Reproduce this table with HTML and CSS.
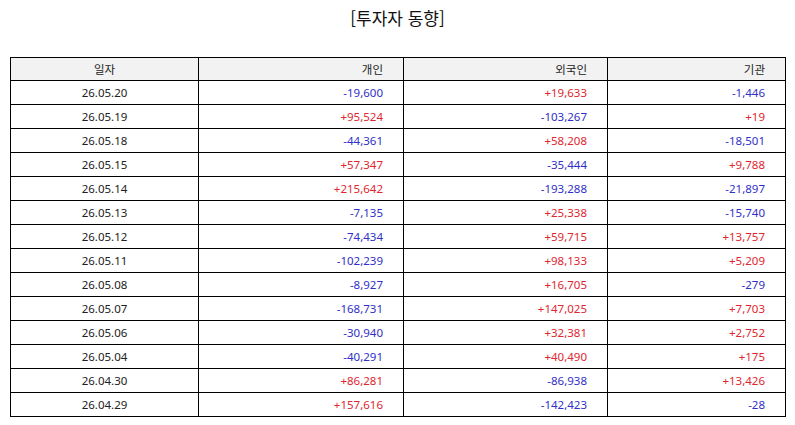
FILE: index.html
```html
<!DOCTYPE html>
<html lang="ko">
<head>
<meta charset="utf-8">
<title>투자자 동향</title>
<link rel="stylesheet" href="styles.css">
</head>
<body>
<div class="page">
  <h1 class="title">[투자자 동향]</h1>
  <table class="trend">
    <colgroup>
      <col class="c-date"><col class="c-ind"><col class="c-for"><col class="c-inst">
    </colgroup>
    <thead>
      <tr><th class="center">일자</th><th>개인</th><th>외국인</th><th>기관</th></tr>
    </thead>
    <tbody>
      <tr><td class="center">26.05.20</td><td class="down">-19,600</td><td class="up">+19,633</td><td class="down">-1,446</td></tr>
      <tr><td class="center">26.05.19</td><td class="up">+95,524</td><td class="down">-103,267</td><td class="up">+19</td></tr>
      <tr><td class="center">26.05.18</td><td class="down">-44,361</td><td class="up">+58,208</td><td class="down">-18,501</td></tr>
      <tr><td class="center">26.05.15</td><td class="up">+57,347</td><td class="down">-35,444</td><td class="up">+9,788</td></tr>
      <tr><td class="center">26.05.14</td><td class="up">+215,642</td><td class="down">-193,288</td><td class="down">-21,897</td></tr>
      <tr><td class="center">26.05.13</td><td class="down">-7,135</td><td class="up">+25,338</td><td class="down">-15,740</td></tr>
      <tr><td class="center">26.05.12</td><td class="down">-74,434</td><td class="up">+59,715</td><td class="up">+13,757</td></tr>
      <tr><td class="center">26.05.11</td><td class="down">-102,239</td><td class="up">+98,133</td><td class="up">+5,209</td></tr>
      <tr><td class="center">26.05.08</td><td class="down">-8,927</td><td class="up">+16,705</td><td class="down">-279</td></tr>
      <tr><td class="center">26.05.07</td><td class="down">-168,731</td><td class="up">+147,025</td><td class="up">+7,703</td></tr>
      <tr><td class="center">26.05.06</td><td class="down">-30,940</td><td class="up">+32,381</td><td class="up">+2,752</td></tr>
      <tr><td class="center">26.05.04</td><td class="down">-40,291</td><td class="up">+40,490</td><td class="up">+175</td></tr>
      <tr><td class="center">26.04.30</td><td class="up">+86,281</td><td class="down">-86,938</td><td class="up">+13,426</td></tr>
      <tr><td class="center">26.04.29</td><td class="up">+157,616</td><td class="down">-142,423</td><td class="down">-28</td></tr>
    </tbody>
  </table>
</div>
</body>
</html>
```
FILE: styles.css
```css
html, body {
  margin: 0;
  padding: 0;
  background: #ffffff;
}
.page {
  padding: 6px 10px 0 10px;
  font-family: "Noto Sans", "Noto Sans CJK KR", sans-serif;
  color: #222;
}
.title {
  margin: 0 0 27px 0;
  text-align: center;
  font-size: 17px;
  font-weight: normal;
  line-height: 24px;
  color: #111;
  font-family: "Noto Sans CJK KR", sans-serif;
}
.trend {
  width: 775px;
  border-collapse: collapse;
  table-layout: fixed;
  font-size: 11.5px;
}
.c-date { width: 188px; }
.c-ind { width: 205px; }
.c-for { width: 204px; }
.c-inst { width: 178px; }
.trend th, .trend td {
  border: 1px solid #000;
  height: 24px;
  padding: 0 20px 0 4px;
  text-align: right;
  font-weight: normal;
  line-height: 14px;
  box-sizing: border-box;
}
.trend th {
  height: 23px;
  background: #f2f2f2;
  color: #222;
  font-family: "Noto Sans CJK KR", sans-serif;
}
.trend .center {
  text-align: center;
  padding: 0 4px;
}
.up { color: #e0262f; }
.down { color: #3030c8; }
```
